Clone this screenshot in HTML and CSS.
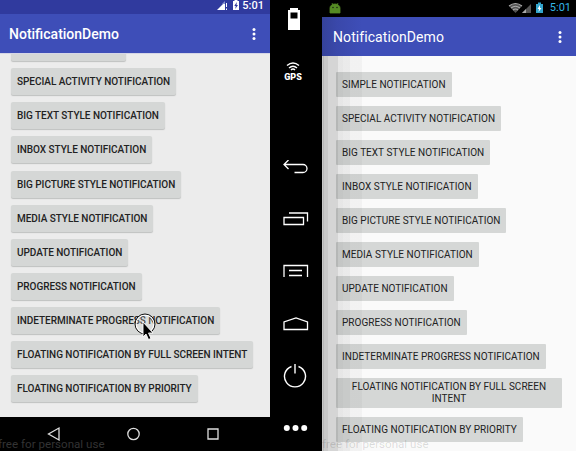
FILE: index.html
```html
<!DOCTYPE html>
<html lang="en">
<head>
<meta charset="utf-8">
<title>NotificationDemo</title>
<link rel="stylesheet" href="styles.css">
</head>
<body>
<main class="stage">
  <section class="phone phone-left">
    <header class="status">
      <svg class="status-icons" width="24" height="12" viewBox="0 0 24 12"><path d="M0 10 8 2v8z" fill="#fff"/><path d="M5 4 8 1v3z" fill="#8b94d0"/><path d="M9.500 3v4M9.500 8.500V10" stroke="#fff"/><path d="M16 1h1.500V0h3v1H22v9h-6z" fill="#fff"/><path d="m19.800 2-2.500 4h1.500l-.6 3L21 5h-1.500z" fill="#303a9e"/></svg>
      <span class="clock">5:01</span>
    </header>
    <div class="appbar"><h1>NotificationDemo</h1><svg width="4" height="14" viewBox="0 0 4 14" fill="#fff"><circle cx="2" cy="2.500" r="1.500"/><circle cx="2" cy="7" r="1.500"/><circle cx="2" cy="11.500" r="1.500"/></svg></div>
    <div class="list">
      <button class="peek" aria-label="Simple notification"></button>
      <button>SPECIAL ACTIVITY NOTIFICATION</button>
      <button>BIG TEXT STYLE NOTIFICATION</button>
      <button>INBOX STYLE NOTIFICATION</button>
      <button>BIG PICTURE STYLE NOTIFICATION</button>
      <button>MEDIA STYLE NOTIFICATION</button>
      <button>UPDATE NOTIFICATION</button>
      <button>PROGRESS NOTIFICATION</button>
      <button>INDETERMINATE PROGRESS NOTIFICATION</button>
      <button>FLOATING NOTIFICATION BY FULL SCREEN INTENT</button>
      <button>FLOATING NOTIFICATION BY PRIORITY</button>
    </div>
    <nav class="navbar">
      <svg width="270" height="34" viewBox="0 0 270 34" fill="none" stroke="#ddd" stroke-width="1.300"><path d="M59 11v12l-10.500-6z"/><circle cx="133.500" cy="17" r="5.700"/><path d="M208 12h10v10h-10z"/></svg>
    </nav>
    <span class="watermark">free for personal use</span>
    <svg class="cursor" width="24" height="30" viewBox="0 0 24 30"><circle cx="12" cy="12" r="9" fill="#fff" fill-opacity=".2" stroke="#fff" stroke-width="1.300"/><circle cx="12" cy="12" r="10" fill="none" stroke="#111"/><path d="M10 10v15l3-3 2.500 5.500 2.500-1-2.500-5.500h4.500z" fill="#000" stroke="#fff" stroke-width=".9"/></svg>
  </section>

  <aside class="tools">
    <svg class="battery" width="12" height="22" viewBox="0 0 12 22"><path d="M2 0h8v2h2v20H0V2h2z" fill="#fff"/><path d="M2.500 4.500h7v6h-7z"/></svg>
    <div class="gps"><svg width="14" height="9" viewBox="0 0 14 9" fill="none" stroke="#fff" stroke-width="1.500"><path d="M1 3.500Q7-1.500 13 3.500M3 6q4-3.500 8 0M5 8q2-2 4 0"/></svg><span>GPS</span></div>
    <svg class="back" width="26" height="14" viewBox="0 0 26 14" fill="none" stroke="#fff" stroke-width="1.300"><path d="M5.500 0 1 4.500 5.500 9M1 4.500h19a4 4 0 0 1 0 8h-8.500"/></svg>
    <svg class="recent" width="26" height="14" viewBox="0 0 26 14" fill="none" stroke="#fff" stroke-width="1.300"><path d="M1 5.500h19.500V12.500H1zM6 1h18.500v8.500"/></svg>
    <svg class="menu" width="26" height="14" viewBox="0 0 26 14" fill="none" stroke="#fff" stroke-width="1.300"><path d="M1 13V1.500h23.500V13M6 6.500h13M6 11.500h13"/></svg>
    <svg class="home" width="26" height="14" viewBox="0 0 26 14" fill="none" stroke="#fff" stroke-width="1.300"><path d="M1 12.500V5l12-4 11.500 4v7.500z"/></svg>
    <svg class="power" width="24" height="26" viewBox="0 0 24 26" fill="none" stroke="#fff" stroke-width="1.400"><path d="M8.500 3.500a10.500 10.500 0 1 0 7 0M12 1v9.500"/></svg>
    <svg class="more" width="26" height="8" viewBox="0 0 26 8" fill="#fff"><circle cx="3.800" cy="4" r="3"/><circle cx="12.500" cy="4" r="3"/><circle cx="21.200" cy="4" r="3"/></svg>
  </aside>

  <section class="phone phone-right">
    <header class="status">
      <svg class="android" width="12" height="12" viewBox="0 0 12 12"><path d="M1 11V6a5 4 0 0 1 10 0v5zM3 1l1.500 3M9 1 7.500 4" fill="#558b24" stroke="#558b24" stroke-width=".8"/><circle cx="4" cy="5.500" r=".7" fill="#111"/><circle cx="8" cy="5.500" r=".7" fill="#111"/></svg>
      <svg class="status-icons" width="36" height="12" viewBox="0 0 36 12"><path d="M1 4Q7-1 14 4L7.500 11z" fill="#555"/><path d="M1 4q6.500-5 13 0M3 6q4.500-3.500 9 0M5 8q2.500-2 5 0" fill="none" stroke="#aaa" stroke-width="1.100"/><path d="M14 11 23 2v9z" fill="#555"/><path d="M14 11l4-4v4z" fill="#aaa"/><path d="M28 2h2V.5h3V2h2v9h-7z" fill="#33a5cc"/><path d="m32 3-2.500 4h1.500l-.5 3L33.500 6H32z" fill="#fff"/></svg>
      <span class="clock">5:01</span>
    </header>
    <div class="appbar"><h1>NotificationDemo</h1><svg width="4" height="14" viewBox="0 0 4 14" fill="#fff"><circle cx="2" cy="2.500" r="1.500"/><circle cx="2" cy="7" r="1.500"/><circle cx="2" cy="11.500" r="1.500"/></svg></div>
    <div class="list">
      <button>SIMPLE NOTIFICATION</button>
      <button>SPECIAL ACTIVITY NOTIFICATION</button>
      <button>BIG TEXT STYLE NOTIFICATION</button>
      <button>INBOX STYLE NOTIFICATION</button>
      <button>BIG PICTURE STYLE NOTIFICATION</button>
      <button>MEDIA STYLE NOTIFICATION</button>
      <button>UPDATE NOTIFICATION</button>
      <button>PROGRESS NOTIFICATION</button>
      <button>INDETERMINATE PROGRESS NOTIFICATION</button>
      <button class="two-line">FLOATING NOTIFICATION BY FULL SCREEN<br>INTENT</button>
      <button>FLOATING NOTIFICATION BY PRIORITY</button>
    </div>
    <div class="edge-shade"></div>
    <span class="watermark">free for personal use</span>
  </section>
</main>
</body>
</html>
```
FILE: styles.css
```css
* { box-sizing: border-box; }
body { margin: 0; background: #000; font-family: Roboto, sans-serif; }
svg { display: block; flex: none; }
.stage { display: grid; grid-template-columns: 270px 52px 254px; width: 576px; height: 451px; overflow: hidden; }
.phone { position: relative; display: flex; flex-direction: column; height: 451px; overflow: hidden; }
.status { display: flex; align-items: center; flex: none; }
.clock { font-size: 11px; line-height: 12px; }
.appbar { display: flex; align-items: center; justify-content: space-between; flex: none; color: #fff; background: #3e4eb8; }
h1 { margin: 0; font-size: 14px; line-height: 18px; font-weight: 500; white-space: nowrap; }
.list { display: flex; flex-direction: column; align-items: flex-start; flex: 1; min-height: 0; overflow: hidden; }
button { flex: none; border: 0; margin: 0; padding: 0 6px; background: #d5d7d6; color: #222; font-family: inherit; font-size: 10px; line-height: 12px; white-space: nowrap; border-radius: 2px; }

.phone-left { background: #ececec; }
.phone-left .status { height: 14px; background: #303a9e; color: #fff; padding: 0 6px 3px 217px; justify-content: space-between; }
.phone-left .clock { font-weight: 500; }
.phone-left .appbar { height: 39px; padding: 1px 14px 0 9px; }
.phone-left .list { padding-left: 11px; border-top: 1px solid #d5d6e6; gap: 7.150px; }
.phone-left button { height: 27px; padding-top: 1px; font-weight: 500; letter-spacing: -.04px; box-shadow: 0 1px 1px #bfc1c0; }
.phone-left .peek { width: 115px; margin-top: -20px; }
.navbar { height: 34px; flex: none; background: #000; }

.tools { display: flex; flex-direction: column; align-items: flex-start; background: #000; padding-left: 13px; }
.battery { margin: 8px 0 0 5px; }
.gps { display: flex; flex-direction: column; align-items: center; width: 20px; margin-top: 32px; color: #fff; font: 900 9px/13px Roboto, sans-serif; }
.back { margin-top: 76px; }
.recent { margin-top: 38px; }
.menu { margin-top: 38px; }
.home { margin-top: 39px; }
.power { margin-top: 32px; }
.more { margin-top: 35px; }

.phone-right { background: #fafafa; }
.phone-right .status { height: 17px; background: #000; color: #33b5e5; padding: 0 5px 2px 7px; }
.phone-right .status-icons { margin-left: auto; margin-right: 6px; }
.phone-right .clock { font-size: 11px; }
.phone-right .appbar { height: 39px; padding: 0 14px 0 11px; background: linear-gradient(90deg, #35429a 0, #3a48aa 15px, #3e4eb8 40px); }
.phone-right h1 { font-weight: 400; letter-spacing: .08px; }
.phone-right .list { padding: 16px 0 0 14px; gap: 9px; }
.phone-right button { height: 25px; padding-top: 1px; border-radius: 1px; letter-spacing: .02px; }
.phone-right .two-line { width: 226px; height: 30px; padding-top: 0; }
.edge-shade { position: absolute; left: 0; top: 56px; width: 40px; bottom: 0; background: linear-gradient(90deg, #0003 0 1px, #0004 1px 2px, #0003 2px 6px, #00000026 6px 16px, #00000014 16px 21px, #00000010 21px 28px, #00000008 28px 40px); }
.watermark { position: absolute; left: -2px; bottom: 0; font-size: 11.600px; line-height: 14px; color: #333; white-space: nowrap; }
.phone-right .watermark { left: 0; color: #0002; }
.cursor { position: absolute; left: 133px; top: 312px; }
```
